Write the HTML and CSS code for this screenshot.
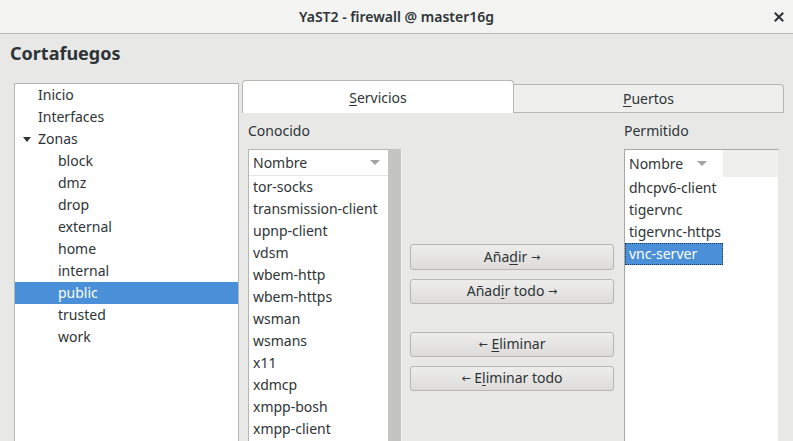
FILE: index.html
```html
<!DOCTYPE html>
<html lang="es">
<head>
<meta charset="utf-8">
<title>YaST2 - firewall @ master16g</title>
<link rel="stylesheet" href="styles.css">
</head>
<body>
<div class="titlebar">
  <span class="title">YaST2 - firewall @ master16g</span>
  <svg class="close" width="10" height="10" viewBox="0 0 10 10"><path d="M1.5 1.5 L8.5 8.5 M8.5 1.5 L1.5 8.5" stroke="#2e3436" stroke-width="2" stroke-linecap="square"/></svg>
</div>
<div class="main">
  <h1 class="heading">Cortafuegos</h1>
  <div class="content">
    <div class="tree">
      <div class="trow l1">Inicio</div>
      <div class="trow l1">Interfaces</div>
      <div class="trow l0"><span class="expander"></span>Zonas</div>
      <div class="trow l2">block</div>
      <div class="trow l2">dmz</div>
      <div class="trow l2">drop</div>
      <div class="trow l2">external</div>
      <div class="trow l2">home</div>
      <div class="trow l2">internal</div>
      <div class="trow l2 sel">public</div>
      <div class="trow l2">trusted</div>
      <div class="trow l2">work</div>
    </div>
    <div class="pane">
      <div class="tabs">
        <div class="tab active"><span class="u">S</span>ervicios</div>
        <div class="tab"><span class="u">P</span>uertos</div>
      </div>
      <div class="page">
        <div class="col known">
          <div class="label">Conocido</div>
          <div class="list">
            <div class="list-main">
              <div class="lhead"><span>Nombre</span><span class="sort"></span></div>
              <div class="lrow">tor-socks</div>
              <div class="lrow">transmission-client</div>
              <div class="lrow">upnp-client</div>
              <div class="lrow">vdsm</div>
              <div class="lrow">wbem-http</div>
              <div class="lrow">wbem-https</div>
              <div class="lrow">wsman</div>
              <div class="lrow">wsmans</div>
              <div class="lrow">x11</div>
              <div class="lrow">xdmcp</div>
              <div class="lrow">xmpp-bosh</div>
              <div class="lrow">xmpp-client</div>
            </div>
            <div class="scrollbar"></div>
          </div>
        </div>
        <div class="col buttons">
          <button class="btn b1">Aña<span class="u">d</span>ir <span class="arrow">→</span></button>
          <button class="btn b2">Añad<span class="u">i</span>r todo <span class="arrow">→</span></button>
          <button class="btn b3"><span class="arrow">←</span> <span class="u">E</span>liminar</button>
          <button class="btn b4"><span class="arrow">←</span> E<span class="u">l</span>iminar todo</button>
        </div>
        <div class="col allowed">
          <div class="label">Permitido</div>
          <div class="list list2">
            <div class="lhead2">
              <div class="lhead-cell"><span>Nombre</span><span class="sort"></span></div>
              <div class="lhead-fill"></div>
            </div>
            <div class="lrow">dhcpv6-client</div>
            <div class="lrow">tigervnc</div>
            <div class="lrow">tigervnc-https</div>
            <div class="lrow selrow"><span class="selitem">vnc-server</span></div>
          </div>
        </div>
      </div>
    </div>
  </div>
</div>
</body>
</html>
```

FILE: styles.css
```css
html, body {
  margin: 0;
  padding: 0;
  width: 793px;
  height: 441px;
  overflow: hidden;
  background: #e8e8e7;
  font-family: "Noto Sans", "DejaVu Sans", sans-serif;
  font-size: 14px;
  color: #2e3436;
}

.titlebar {
  height: 33px;
  background: #f3f3f2;
  border-bottom: 1px solid #b9b9b7;
  display: flex;
  align-items: center;
  justify-content: center;
  position: relative;
}

.title {
  font-weight: 600;
  font-size: 14px;
  color: #2e3436;
}

.close {
  position: absolute;
  right: 9px;
  top: 12px;
}

.main {
  padding: 0 0 0 10px;
}

.heading {
  margin: 8px 0 0 0;
  font-size: 18px;
  line-height: 22px;
  font-weight: bold;
  color: #2e3436;
}

.content {
  display: flex;
  margin-top: 16px;
  padding-left: 4px;
  align-items: flex-start;
}

.tree {
  width: 223px;
  height: 357px;
  margin-top: 3px;
  background: #fff;
  border: 1px solid #b6b6b3;
  border-bottom: none;
}

.trow {
  height: 22px;
  line-height: 22px;
  white-space: nowrap;
  display: flex;
  align-items: center;
}

.l0 { padding-left: 8px; }
.l1 { padding-left: 23px; }
.l2 { padding-left: 43px; }

.expander {
  width: 0;
  height: 0;
  border-left: 4px solid transparent;
  border-right: 4px solid transparent;
  border-top: 5px solid #2e3436;
  margin-right: 7px;
}

.trow.sel {
  background: #4a90d9;
  color: #fff;
}

.pane {
  margin-left: 3px;
  width: 542px;
}

.tabs {
  display: flex;
  align-items: flex-end;
  height: 33px;
}

.tab {
  box-sizing: border-box;
  display: flex;
  align-items: center;
  justify-content: center;
}

.tab.active {
  width: 272px;
  height: 33px;
  background: #fff;
  border: 1px solid #b6b6b3;
  border-bottom: none;
  border-radius: 4px 4px 0 0;
}

.tab:not(.active) {
  width: 270px;
  height: 29px;
  background: #efefee;
  border: 1px solid #b6b6b3;
  border-left: none;
  border-radius: 0 4px 0 0;
  padding-bottom: 1px;
}

.u {
  text-decoration: underline;
  text-underline-offset: 2px;
}

.arrow {
  font-family: "DejaVu Sans", sans-serif;
  font-size: 11px;
  vertical-align: 1px;
}

.page {
  display: flex;
  padding: 9px 0 0 6px;
  height: 320px;
}

.col {
  display: flex;
  flex-direction: column;
}

.label {
  height: 18px;
  line-height: 18px;
  margin-bottom: 9px;
}

.known { width: 154px; }

.list {
  display: flex;
  background: #fff;
  border: 1px solid #b6b6b3;
  border-bottom: none;
  height: 293px;
  box-sizing: border-box;
}

.list-main {
  flex: 1;
  display: flex;
  flex-direction: column;
  overflow: hidden;
}

.scrollbar {
  width: 13px;
  background: #c4c5c3;
  border-right: 1px solid #f4f4f3;
  margin-top: -1px;
}

.known .list {
  border-right: none;
}

.lhead {
  height: 25px;
  flex: none;
  display: flex;
  align-items: center;
  justify-content: space-between;
  padding: 0 8px 0 4px;
  border-bottom: 1px solid #e6e6e6;
}

.sort {
  width: 0;
  height: 0;
  border-left: 5px solid transparent;
  border-right: 5px solid transparent;
  border-top: 5px solid #a3a3a3;
}

.lrow {
  height: 22px;
  flex: none;
  line-height: 22px;
  padding-left: 4px;
  white-space: nowrap;
}

.buttons {
  width: 204px;
  margin-left: 8px;
  padding-top: 122px;
}

.btn {
  box-sizing: border-box;
  height: 26px;
  width: 204px;
  border: 1px solid #b6b6b3;
  border-radius: 3px;
  background: linear-gradient(#ededec, #dddcda);
  font-family: "Noto Sans", "DejaVu Sans", sans-serif;
  font-size: 14px;
  color: #2e3436;
  padding: 0;
  line-height: 22px;
}

.b2 { margin-top: 9px; height: 25px; }
.b3 { margin-top: 28px; height: 25px; }
.b4 { margin-top: 9px; height: 25px; }

.allowed {
  width: 155px;
  margin-left: 10px;
}

.list2 {
  flex-direction: column;
  border-color: #a8a8a6;
  border-right: 1px solid #e8e8e7;
}

.lhead2 {
  display: flex;
  height: 27px;
  flex: none;
}

.lhead-cell {
  width: 98px;
  box-sizing: border-box;
  display: flex;
  align-items: center;
  justify-content: space-between;
  padding: 0 16px 0 4px;
}

.lhead-fill {
  flex: 1;
  background: #efefee;
}

.list2 .selrow {
  padding-left: 0;
}

.selitem {
  display: inline-block;
  box-sizing: border-box;
  width: 98px;
  height: 22px;
  line-height: 20px;
  padding-left: 3px;
  background: #4a90d9;
  color: #fff;
  border: 1px dotted #1d3a5c;
}
```
